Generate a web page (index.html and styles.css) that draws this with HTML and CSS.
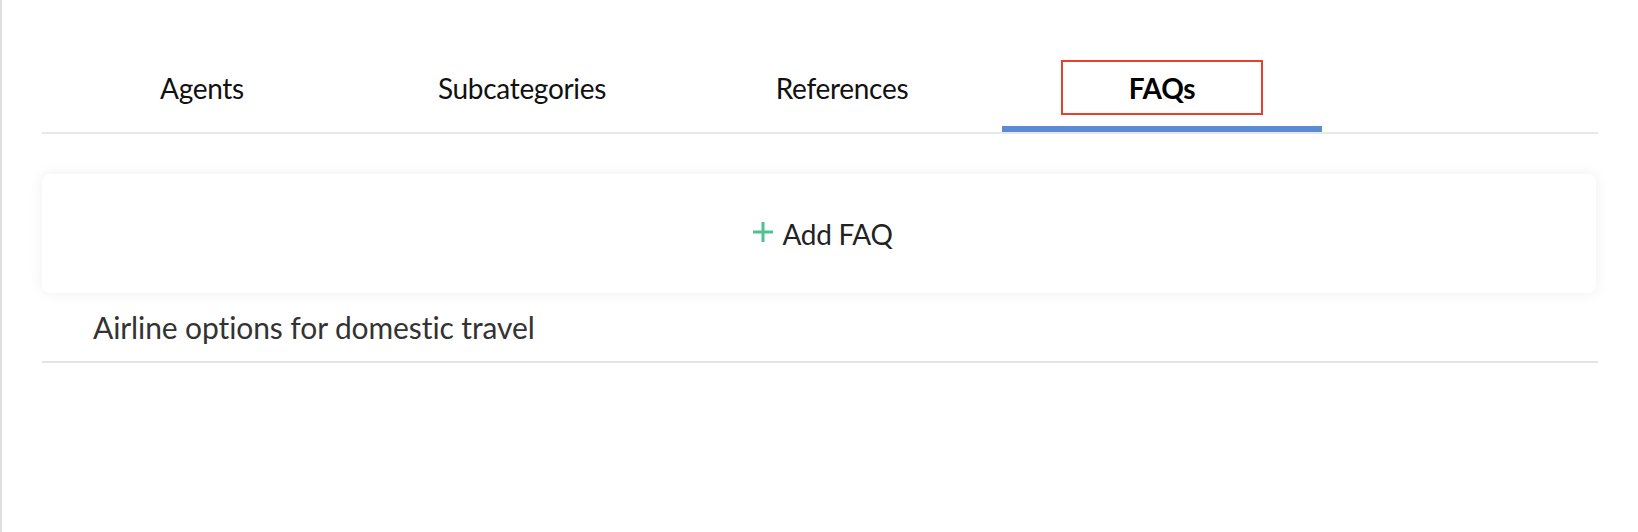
FILE: index.html
```html
<!DOCTYPE html>
<html lang="en">
<head>
    <meta charset="UTF-8">
    <meta name="viewport" content="width=device-width, initial-scale=1.0">
    <title>Category FAQs</title>
    <link rel="stylesheet" href="styles.css">
</head>
<body>
    <div class="page">
        <div class="tabs">
            <div class="tab"><span class="tab-label">Agents</span></div>
            <div class="tab"><span class="tab-label">Subcategories</span></div>
            <div class="tab"><span class="tab-label">References</span></div>
            <div class="tab active"><span class="tab-label highlight">FAQs</span></div>
        </div>

        <div class="add-card">
            <span class="plus">
                <svg width="22" height="22" viewBox="0 0 22 22">
                    <path d="M11 1v20M1 11h20" stroke="#4fc295" stroke-width="3" fill="none"/>
                </svg>
            </span>
            <span class="add-text">Add FAQ</span>
        </div>

        <div class="faq-list">
            <div class="faq-item">Airline options for domestic travel</div>
        </div>
    </div>
</body>
</html>
```

FILE: styles.css
```css
html, body {
    margin: 0;
    padding: 0;
    background-color: #fff;
}
body {
    font-family: Lato, "Open Sans", Arial, sans-serif;
    color: #222;
    border-left: 2px solid #dedede;
    min-height: 532px;
    box-sizing: border-box;
}
.page {
    width: 1556px;
    margin-left: 40px;
}
.tabs {
    display: flex;
    border-bottom: 2px solid #e8e8e8;
}
.tab {
    width: 320px;
    padding-top: 60px;
    padding-bottom: 11px;
    border-bottom: 6px solid transparent;
    display: flex;
    justify-content: center;
}
.tab.active {
    border-bottom-color: #5b8bd4;
}
.tab-label {
    display: flex;
    align-items: center;
    justify-content: center;
    height: 55px;
    font-size: 28px;
    letter-spacing: -0.3px;
    color: #111;
}
.tab.active .tab-label {
    font-weight: bold;
    color: #000;
}
.highlight {
    width: 202px;
    box-sizing: border-box;
    border: 2px solid #e8402c;
}
.add-card {
    margin-top: 40px;
    width: 1554px;
    height: 119px;
    box-sizing: border-box;
    padding-left: 7px;
    background: #fff;
    border-radius: 8px;
    box-shadow: 0 0 14px rgba(0, 0, 0, 0.07);
    display: flex;
    align-items: center;
    justify-content: center;
}
.plus {
    display: flex;
    margin-right: 8px;
    margin-top: -4px;
}
.add-text {
    font-size: 28px;
    letter-spacing: -0.3px;
    color: #222;
}
.faq-item {
    height: 70px;
    box-sizing: border-box;
    padding-left: 51px;
    display: flex;
    align-items: center;
    font-size: 30px;
    letter-spacing: -0.1px;
    color: #333;
    border-bottom: 2px solid #e4e4e4;
}
```
